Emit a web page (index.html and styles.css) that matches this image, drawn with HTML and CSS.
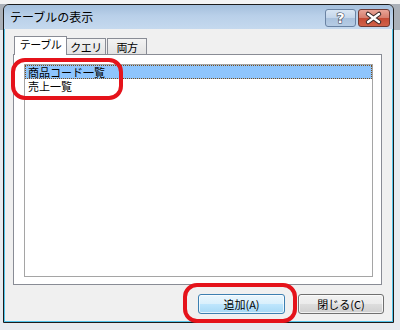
FILE: index.html
```html
<!DOCTYPE html>
<html lang="ja">
<head>
  <meta charset="UTF-8" />
  <title>テーブルの表示</title>
  <link rel="stylesheet" href="styles.css">
</head>
<body>
  <div class="dialog">
    <!-- Title bar with help and close buttons -->
    <div class="titlebar">
      <span class="title">テーブルの表示</span>
      <div class="caption-buttons">
        <div class="cap help">
          <svg width="31" height="18" viewBox="0 0 31 18">
            <text x="15.5" y="14" text-anchor="middle" class="help-glyph">?</text>
          </svg>
        </div>
        <div class="cap close">
          <svg width="32" height="18" viewBox="0 0 32 18">
            <path d="M10 5 L21 13 M21 5 L10 13" stroke="#3a2a2a" stroke-width="4.5" stroke-linecap="round" fill="none" />
            <path d="M10 5 L21 13 M21 5 L10 13" stroke="#fff" stroke-width="2.4" stroke-linecap="round" fill="none" />
          </svg>
        </div>
      </div>
    </div>
    <div class="client">
      <div class="tabs">
        <div class="tab active">テーブル</div>
        <div class="tab query">クエリ</div>
        <div class="tab both">両方</div>
      </div>
      <div class="panel">
        <ul class="listbox">
          <li class="selected">商品コード一覧</li>
          <li>売上一覧</li>
        </ul>
      </div>
      <div class="buttons">
        <div class="btn default">追加(A)</div>
        <div class="btn">閉じる(C)</div>
      </div>
    </div>
  </div>
  <!-- red annotation marks drawn over the dialog -->
  <div class="mark mark-list"></div>
  <div class="mark mark-add"></div>
</body>
</html>
```

FILE: styles.css
```css
body {
  margin: 0;
  width: 400px;
  height: 330px;
  position: relative;
  overflow: hidden;
  font-family: "Noto Sans CJK JP", sans-serif;
  font-size: 11px;
  color: #000;
  background: linear-gradient(#f3f3f3 0, #f3f3f3 4px, #aab0b8 4px, #aab0b8 30px, #e8ebef 30px);
}
.dialog {
  box-sizing: border-box;
  width: 391px;
  height: 319px;
  margin: 4px 0 0 3px;
  border: 1px solid #1c1c1c;
  border-radius: 6px 6px 0 0;
  overflow: hidden;
  display: flex;
  flex-direction: column;
}
.titlebar {
  height: 24px;
  flex: none;
  display: flex;
  justify-content: space-between;
  padding: 0 3px 0 6px;
  background: linear-gradient(#a4bfdc 0%, #b9d0e9 45%, #c5d9ee 100%);
}
.title {
  font-size: 12px;
  line-height: 24px;
  color: #000;
}
.caption-buttons {
  display: flex;
  gap: 2px;
  padding-top: 4px;
}
.cap {
  box-sizing: border-box;
  height: 18px;
  border-radius: 3px;
  display: flex;
}
.cap.help {
  width: 31px;
  border: 1px solid #6a83a3;
  background: linear-gradient(#d9e6f4 0%, #c3d5ea 50%, #a9c1dd 51%, #b6cce4 100%);
}
.cap.close {
  width: 32px;
  border: 1px solid #6e3a34;
  background: linear-gradient(#e8a497 0%, #d67d6c 50%, #c44a34 51%, #d1624a 100%);
}
.cap svg {
  margin: -1px;
}
.help-glyph {
  font-family: "DejaVu Sans", sans-serif;
  font-size: 14px;
  font-weight: bold;
  fill: #fff;
  stroke: #3c4456;
  stroke-width: 1.2px;
  paint-order: stroke;
}
.client {
  flex: 1;
  background: #f0f0f0;
  border: 1px solid #52c4ea;
  border-top: none;
  padding: 7px 8px 7px 8px;
  display: flex;
  flex-direction: column;
}
.tabs {
  height: 19px;
  margin-bottom: -1px;
  padding-left: 1px;
  display: flex;
  align-items: flex-end;
  position: relative;
  z-index: 1;
}
.tab {
  box-sizing: border-box;
  height: 16px;
  margin-bottom: 1px;
  border: 1px solid #898c95;
  border-bottom: none;
  background: linear-gradient(#f3f3f3, #e3e3e3);
  text-align: center;
  line-height: 15px;
  padding-top: 1px;
  letter-spacing: -0.5px;
}
.tab.active {
  width: 53px;
  height: 19px;
  margin-bottom: 0;
  background: #fff;
  line-height: 15px;
  padding-top: 0;
}
.tab.query {
  width: 40px;
  margin-left: -1px;
}
.tab.both {
  width: 40px;
  margin-left: 1px;
}
.panel {
  box-sizing: border-box;
  width: 369px;
  height: 231px;
  background: #fff;
  border: 1px solid #898c95;
  padding: 9px 8px 7px 10px;
}
.listbox {
  box-sizing: border-box;
  height: 213px;
  margin: 0;
  padding: 0;
  list-style: none;
  border: 1px solid #a5a5a5;
  background: #fff;
}
.listbox li {
  box-sizing: border-box;
  height: 14px;
  line-height: 13px;
  padding-left: 2px;
  border: 1px solid transparent;
  white-space: nowrap;
}
.listbox li.selected {
  background: #8ec5fd;
  border: 1px dotted #7a4f1c;
}
.buttons {
  margin-top: 9px;
  display: flex;
  justify-content: flex-end;
  gap: 13px;
}
.btn {
  box-sizing: border-box;
  width: 86px;
  height: 20px;
  border: 1px solid #707070;
  border-radius: 3px;
  background: linear-gradient(#f2f2f2 0%, #ebebeb 50%, #dddddd 51%, #cfcfcf 100%);
  box-shadow: inset 0 0 0 1px rgba(255,255,255,0.7);
  text-align: center;
  line-height: 18px;
}
.btn.default {
  width: 87px;
  border-color: #3c7fb1;
  background: linear-gradient(#eaf6fd 0%, #d9f0fc 50%, #bee6fd 51%, #a7d9f5 100%);
}
.mark {
  position: absolute;
  box-sizing: border-box;
  border: 4px solid #e5131b;
  border-radius: 14px;
}
.mark-list {
  left: 11px;
  top: 58px;
  width: 112px;
  height: 42px;
}
.mark-add {
  left: 183px;
  top: 283px;
  width: 114px;
  height: 40px;
}
```
